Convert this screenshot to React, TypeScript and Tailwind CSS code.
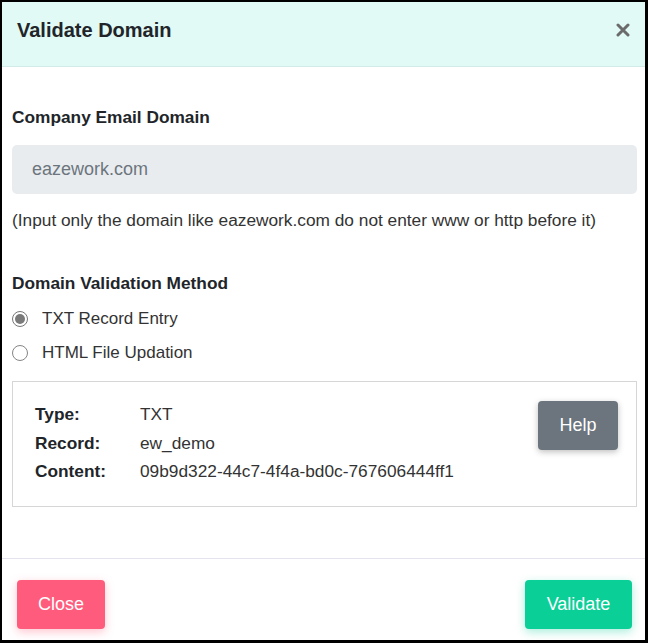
import { useState } from 'react';

function Radio({ checked, label, onClick }: { checked: boolean; label: string; onClick: () => void }) {
  return (
    <label onClick={onClick} className="flex items-center h-[24px] cursor-pointer">
      <span
        className={`w-[16px] h-[16px] rounded-full border flex items-center justify-center bg-white ${
          checked ? 'border-[#767676]' : 'border-[#858585]'
        }`}
      >
        {checked && <span className="w-[10px] h-[10px] rounded-full bg-[#7a7a7a]" />}
      </span>
      <span className="ml-[14px] text-[17px] text-[#333]">{label}</span>
    </label>
  );
}

export default function App() {
  const [method, setMethod] = useState<'txt' | 'html'>('txt');

  return (
    <div
      className="w-[648px] h-[643px] bg-white border-l-2 border-t-2 border-r-[3px] border-b-[3px] border-black flex flex-col"
      style={{ fontFamily: '"Liberation Sans", Arial, sans-serif' }}
    >
      <div className="h-[65px] bg-[#e1faf6] border-b border-[#d3ebe8] flex items-center justify-between pl-[15px] pr-[15px]">
        <h1 className="text-[20px] font-bold text-[#212529] -mt-[8px]">Validate Domain</h1>
        <button className="-mt-[8px] text-[#6b6b6b]">
          <svg width="14" height="14" viewBox="0 0 14 14">
            <path d="M2 2 L12 12 M12 2 L2 12" stroke="currentColor" strokeWidth="3" strokeLinecap="round" />
          </svg>
        </button>
      </div>

      <div className="flex-1 pt-[38px] pl-[10px] pr-[8px]">
        <div className="h-[24px] leading-[24px] text-[17.3px] font-bold text-[#212529]">Company Email Domain</div>
        <div className="mt-[16px] h-[49px] rounded-[5px] bg-[#e9ecef] flex items-center pl-[20px] text-[18px] text-[#6c757d]">
          eazework.com
        </div>
        <div className="mt-[14px] h-[24px] leading-[24px] text-[17.3px] text-[#333]">
          (Input only the domain like eazework.com do not enter www or http before it)
        </div>

        <div className="mt-[39px] h-[24px] leading-[24px] text-[17.3px] font-bold text-[#212529]">
          Domain Validation Method
        </div>
        <div className="mt-[12px]">
          <Radio checked={method === 'txt'} label="TXT Record Entry" onClick={() => setMethod('txt')} />
        </div>
        <div className="mt-[10px]">
          <Radio checked={method === 'html'} label="HTML File Updation" onClick={() => setMethod('html')} />
        </div>

        <div className="mt-[16px] h-[126px] border border-[#d6d6d6] flex justify-between pt-[19px] pl-[22px] pr-[18px]">
          <div className="text-[17.3px] text-[#212529]">
            <div className="flex h-[28.5px] items-center">
              <span className="w-[105px] font-bold">Type:</span>
              <span className="text-[#333]">TXT</span>
            </div>
            <div className="flex h-[28.5px] items-center">
              <span className="w-[105px] font-bold">Record:</span>
              <span className="text-[#333]">ew_demo</span>
            </div>
            <div className="flex h-[28.5px] items-center">
              <span className="w-[105px] font-bold">Content:</span>
              <span className="text-[#333]">09b9d322-44c7-4f4a-bd0c-767606444ff1</span>
            </div>
          </div>
          <button className="w-[80px] h-[49px] rounded-[4px] bg-[#6c757d] text-white text-[18px] shadow-[0_2px_6px_rgba(0,0,0,0.25)]">
            Help
          </button>
        </div>
      </div>

      <div className="h-[82px] border-t border-[#e4e4ef] flex justify-between items-start pt-[21px] pl-[15px] pr-[13px]">
        <button className="w-[88px] h-[49px] rounded-[4px] bg-[#ff5b7c] text-white text-[18px] shadow-[0_3px_10px_rgba(255,91,124,0.35)]">
          Close
        </button>
        <button className="w-[107px] h-[49px] rounded-[4px] bg-[#0acf97] text-white text-[18px] shadow-[0_3px_10px_rgba(10,207,151,0.35)]">
          Validate
        </button>
      </div>
    </div>
  );
}
